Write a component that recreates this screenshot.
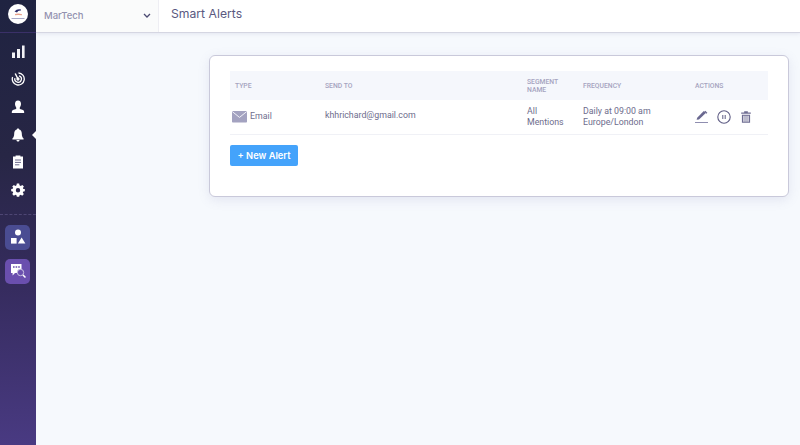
<div class="app">
  <aside class="side">
    <div class="logo-wrap">
      <div class="logo">
        <svg width="20" height="20" viewBox="0 0 20 20">
          <path d="M6.5 7.5 Q9 4.5 13 5.5 L13 6.6 Q10 6.2 9 8.5 Z" fill="#2a2a6a"/>
          <path d="M7 10 Q10 9 14 10.2 L14 11.2 Q10 10.6 7 11.2 Z" fill="#e8a08a"/>
          <rect x="3.5" y="14" width="13" height="1" fill="#a8a8c8"/>
        </svg>
      </div>
    </div>
    <nav class="nav">
      <div class="item">
        <svg width="14" height="14" viewBox="0 0 14 14" fill="#f2f2f6"><rect x="1" y="7.5" width="3" height="5.5"/><rect x="6" y="4" width="3" height="9"/><rect x="11" y="0.5" width="2.6" height="12.5"/></svg>
      </div>
      <div class="item">
        <svg width="14" height="14" viewBox="0 0 14 14" fill="none" stroke="#fff" stroke-width="1.3"><path d="M7.5 1 A6 6 0 1 1 1.6 5"/><path d="M8 3.8 A3.3 3.3 0 1 1 3.9 6.2"/><path d="M7 7 L4.2 1.5" stroke-width="1.5"/><circle cx="7" cy="7" r="1" fill="#fff"/></svg>
      </div>
      <div class="item">
        <svg width="14" height="14" viewBox="0 0 14 14" fill="#fff"><path d="M7 0.5 C9.2 0.5 10 2.2 10 4 C10 5.8 9 7.2 8.6 8 C8.6 9 10 9.4 12 10 C13 10.4 13.2 11.5 13.2 13 L0.8 13 C0.8 11.5 1 10.4 2 10 C4 9.4 5.4 9 5.4 8 C5 7.2 4 5.8 4 4 C4 2.2 4.8 0.5 7 0.5 Z"/></svg>
      </div>
      <div class="item active">
        <svg width="14" height="14" viewBox="0 0 14 14" fill="#fff"><path d="M7 0.5 C7.8 0.5 8.2 1 8.2 1.5 C10 2 10.8 3.6 10.8 5.5 C10.8 8 11.4 9.4 12.6 10.6 L12.6 11.4 L1.4 11.4 L1.4 10.6 C2.6 9.4 3.2 8 3.2 5.5 C3.2 3.6 4 2 5.8 1.5 C5.8 1 6.2 0.5 7 0.5 Z"/><path d="M5.5 12 H8.5 C8.5 13 7.8 13.6 7 13.6 C6.2 13.6 5.5 13 5.5 12 Z"/></svg>
      </div>
      <div class="item">
        <svg width="14" height="14" viewBox="0 0 14 14"><path d="M2 1.6 H4.6 V0.6 H9.4 V1.6 H12 V13.6 H2 Z" fill="#fff"/><path d="M4 5 H10 M4 7.4 H10 M4 9.8 H8.4" stroke="#5c5a80" stroke-width="0.9"/></svg>
      </div>
      <div class="item">
        <svg width="14" height="14" viewBox="0 0 14 14" fill="#fff"><path fill-rule="evenodd" d="M5.8 0.6 H8.2 L8.5 2.3 L9.8 2.9 L11.3 1.9 L12.9 3.6 L11.9 5 L12.4 6 L13.8 6.1 V8.3 L12.3 8.6 L11.8 9.8 L12.9 11 L11.2 12.7 L9.8 11.8 L8.6 12.3 L8.2 13.8 H5.8 L5.5 12.3 L4.3 11.8 L2.9 12.7 L1.2 11 L2.2 9.7 L1.7 8.6 L0.2 8.3 V6.1 L1.7 5.8 L2.2 4.8 L1.2 3.5 L2.9 1.9 L4.3 2.9 L5.5 2.3 Z M7 5 A2.2 2.2 0 1 0 7 9.4 A2.2 2.2 0 1 0 7 5 Z"/></svg>
      </div>
    </nav>
    <div class="sep"></div>
    <div class="tiles">
      <div class="tile blue">
        <svg width="16" height="16" viewBox="0 0 16 16" fill="#fff"><circle cx="8" cy="3.6" r="3"/><rect x="1" y="9" width="5.6" height="5.6"/><path d="M11.6 8.6 L15.4 14.6 H7.9 Z"/></svg>
      </div>
      <div class="tile purple">
        <svg width="20" height="18" viewBox="0 0 20 18">
          <path d="M3 2 H13.5 V11 H7 L4.6 13.4 V11 H3 Z" fill="#fff"/>
          <path d="M5 5 H6.6 M7.6 5 H9.2 M10.2 5 H11.8" stroke="#6a4fae" stroke-width="1.3"/>
          <circle cx="12.5" cy="10.5" r="3.2" fill="#6a4fae" stroke="#c9c2e2" stroke-width="1"/>
          <path d="M15 13 L17.5 15.5" stroke="#fff" stroke-width="1.5"/>
        </svg>
      </div>
    </div>
  </aside>

  <div class="main">
    <header class="head">
      <div class="picker">
        <span>MarTech</span>
        <svg width="8" height="6" viewBox="0 0 8 6" fill="none" stroke="#4c4a72" stroke-width="1.3"><path d="M1 1 L4 4 L7 1"/></svg>
      </div>
      <h1>Smart Alerts</h1>
    </header>

    <div class="content">
      <section class="card">
        <div class="table">
          <div class="row th">
            <div class="c1">TYPE</div>
            <div class="c2">SEND TO</div>
            <div class="c3">SEGMENT NAME</div>
            <div class="c4">FREQUENCY</div>
            <div class="c5">ACTIONS</div>
          </div>
          <div class="row td">
            <div class="c1 type">
              <svg width="15" height="12" viewBox="0 0 15 12"><rect width="15" height="11.5" rx="0.8" fill="#a3a2c0"/><path d="M0.3 0.6 L7.5 6.4 L14.7 0.6" fill="none" stroke="#f1f1f7" stroke-width="1"/></svg>
              <span>Email</span>
            </div>
            <div class="c2 mail">khhrichard@gmail.com</div>
            <div class="c3">All Mentions</div>
            <div class="c4">Daily at 09:00 am<br />Europe/London</div>
            <div class="c5 acts">
              <svg width="13" height="13" viewBox="0 0 13 13"><path d="M2.2 9 L8.8 2.2 L10.8 4.2 L4 10.8 L1.6 11 Z" fill="#6a6890" transform="translate(0 -1.2)"/><path d="M9.8 1.2 L11.9 3.2" stroke="#6a6890" stroke-width="1.4"/><path d="M0 12.5 H13" stroke="#8f8eb0" stroke-width="1"/></svg>
              <svg width="14" height="14" viewBox="0 0 14 14" fill="none" stroke="#5f5d85"><circle cx="7" cy="7" r="6.2" stroke-width="1.1"/><path d="M5.8 5 V9 M8.2 5 V9" stroke-width="1"/></svg>
              <svg width="10" height="12" viewBox="0 0 11 13" fill="#6f6d92"><path d="M3.5 0.3 H7.5 V1.5 H10.8 V3 H0.2 V1.5 H3.5 Z"/><path fill-rule="evenodd" d="M1 4 H10 V12.8 H1 Z M2.6 5.2 V11.6 H3.9 V5.2 Z M4.9 5.2 V11.6 H6.1 V5.2 Z M7.1 5.2 V11.6 H8.4 V5.2 Z"/></svg>
            </div>
          </div>
        </div>
        <button class="new">+ New Alert</button>
      </section>
    </div>
  </div>
</div>

<style>
  :global(body) { margin: 0; background: #f6f9fd; }
  .app { display: flex; width: 800px; height: 445px; overflow: hidden; font-family: Roboto, "Liberation Sans", sans-serif; }
  .side {
    width: 36px; flex: none; display: flex; flex-direction: column;
    background: linear-gradient(180deg, #1f2341 0%, #272645 35%, #362c5f 65%, #493a82 100%);
  }
  .logo-wrap { height: 33px; flex: none; box-sizing: border-box; padding-top: 4px; display: flex; justify-content: center; border-bottom: 1px solid #3a3068; }
  .logo { width: 20px; height: 20px; border-radius: 50%; background: #fff; display: flex; }
  .nav { display: flex; flex-direction: column; padding-top: 5px; }
  .item { height: 27.6px; display: flex; align-items: center; justify-content: center; position: relative; }
  .active::after {
    content: ''; position: absolute; right: 0; top: 50%; margin-top: -4px;
    border: 4px solid transparent; border-right-color: #fff; border-left-width: 0;
  }
  .sep { margin-top: 10px; border-top: 1px dashed #4e4674; }
  .tiles { display: flex; flex-direction: column; gap: 9px; padding: 10px 0 0 5px; }
  .tile { width: 25px; height: 25px; border-radius: 5px; display: flex; align-items: center; justify-content: center; }
  .blue { background: #4a4c92; }
  .purple { background: #6a4fae; }

  .main { flex: 1; min-width: 0; display: flex; flex-direction: column; }
  .head {
    height: 33px; flex: none; box-sizing: border-box; display: flex; align-items: stretch;
    background: #fff; border-bottom: 1px solid #d5d6e2; box-shadow: 0 1px 4px rgba(90, 90, 140, .12);
  }
  .picker {
    width: 123px; box-sizing: border-box; padding: 0 7px 1px 8px; display: flex; align-items: center; justify-content: space-between;
    background: #fafbfb; border-right: 1px solid #eeeef3;
    font: 500 9.5px Inter, "Open Sans", sans-serif; color: #9392b0;
  }
  h1 { margin: 0 0 0 12px; align-self: center; font: 400 12.2px/16px Inter, "Open Sans", sans-serif; color: #5a597f; padding-bottom: 4px; }

  .content { padding: 22px 11px 0 173px; }
  .card {
    box-sizing: border-box; height: 142px; padding: 15px 20px 0; background: #fff;
    border: 1px solid #c9c9da; border-radius: 6px; box-shadow: 0 3px 12px rgba(110, 110, 170, .14);
  }
  .table { display: flex; flex-direction: column; }
  .row { display: grid; grid-template-columns: 90px 202px 56px 112px 73px; }
  .th {
    height: 29px; align-items: center; background: #f5f7fc; padding-left: 5px;
    font-size: 6.8px; line-height: 8px; font-weight: 500; color: #a5a4c0;
  }
  .td {
    height: 35px; box-sizing: border-box; align-items: center; padding: 0 0 1px 5px; border-bottom: 1px solid #f0f1f6;
    font-size: 8.8px; line-height: 11px; color: #6d6c8c;
  }
  .type { display: flex; align-items: center; gap: 3px; margin-left: -3px; }
  .type span { color: #6f6e8e; }
  .mail { margin-bottom: 2px; }
  .c3 { padding-right: 8px; }
  .acts { display: flex; align-items: center; gap: 9px; margin-top: 0; }
  .acts svg:last-child { margin-left: 1px; }
  .new {
    display: block; margin-top: 10px; width: 68px; height: 21px; padding: 0; border: 0; border-radius: 2px;
    background: #44a3fb; color: #fff; font: 600 9.3px Inter, "Open Sans", sans-serif;
  }
</style>
